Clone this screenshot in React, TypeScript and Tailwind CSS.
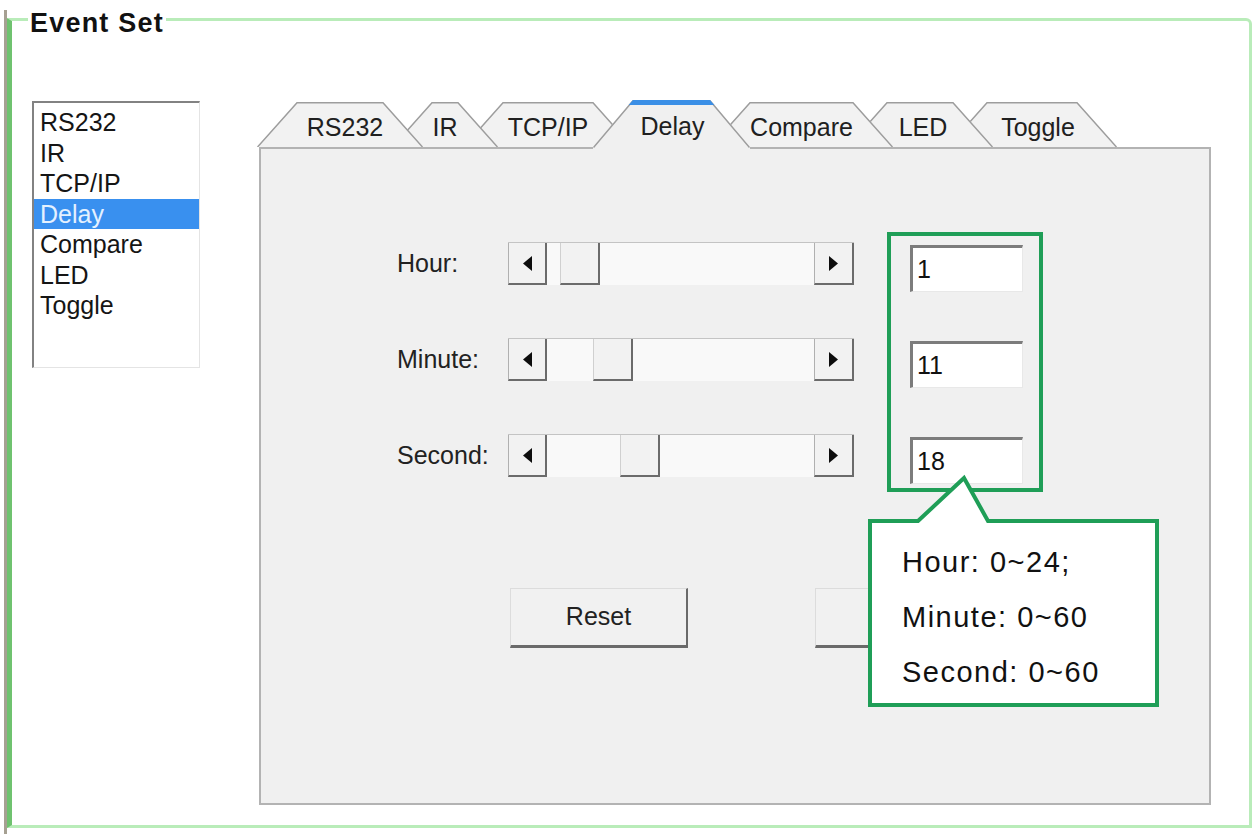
const tabs = [
  { label: "RS232", w: 166, cls: "w-[166px] ml-[-2px] z-[7]", pl: "pl-[10px]" },
  { label: "IR", w: 106, cls: "w-[106px] ml-[-31px] z-[6]", pl: "pl-0" },
  { label: "TCP/IP", w: 170, cls: "w-[170px] ml-[-35px] z-[5]", pl: "pl-0" },
  { label: "Delay", w: 157, cls: "w-[157px] ml-[-40px] z-[20]", pl: "pl-[2px]", active: true },
  { label: "Compare", w: 183, cls: "w-[183px] ml-[-40px] z-[4]", pl: "pl-0" },
  { label: "LED", w: 146, cls: "w-[146px] ml-[-46px] z-[3]", pl: "pl-[6px]" },
  { label: "Toggle", w: 170, cls: "w-[170px] ml-[-46px] z-[2]", pl: "pl-[12px]" },
];

const listItems = ["RS232", "IR", "TCP/IP", "Delay", "Compare", "LED", "Toggle"];

const rows = [
  { label: "Hour:", value: "1", thumb: "ml-[13px]" },
  { label: "Minute:", value: "11", thumb: "ml-[46px]" },
  { label: "Second:", value: "18", thumb: "ml-[73px]" },
];

function Tab({ label, w, cls, pl, active }: { label: string; w: number; cls: string; pl: string; active?: boolean }) {
  return (
    <div className={`relative flex shrink-0 items-center justify-center pt-[6px] ${active ? "h-[49px] pb-[2px]" : "h-[47px] pt-[8px]"} ${cls} ${pl}`}>
      {active ? (
        <svg className="absolute inset-0" width={w} height={49}>
          <polygon points={`0,47 40,0 ${w - 40},0 ${w},47 ${w},49 0,49`} fill="#f0f0f0" />
          <path d={`M0.5,47.5 L40,0.75 L${w - 40},0.75 L${w - 0.5},47.5`} fill="none" stroke="#9d9d9d" strokeWidth="1.5" />
          <polygon points={`40,0 ${w - 40},0 ${w - 35.7},5 35.7,5`} fill="#3b8fe6" />
        </svg>
      ) : (
        <svg className="absolute inset-0" width={w} height={47}>
          <polygon points={`0,47 40,2 ${w - 40},2 ${w},47`} fill="#f2f2f2" />
          <path d={`M0.5,47 L40,2.75 L${w - 40},2.75 L${w - 0.5},47`} fill="none" stroke="#9d9d9d" strokeWidth="1.5" />
        </svg>
      )}
      <span className="relative text-[25px] leading-none text-[#202020]">{label}</span>
    </div>
  );
}

function Arrow({ dir }: { dir: "left" | "right" }) {
  return (
    <svg width="9" height="15" viewBox="0 0 9 15">
      <polygon points={dir === "left" ? "9,0 0,7.5 9,15" : "0,0 9,7.5 0,15"} fill="#0d0d0d" />
    </svg>
  );
}

function ScrollBar({ thumb }: { thumb: string }) {
  const btn =
    "flex items-center justify-center bg-[#f2f2f2] border-l border-l-[#b0b0b0] border-b-2 border-b-[#6b6b6b] border-r-2 border-r-[#6b6b6b]";
  return (
    <div className="flex h-[43px] w-[346px] border-t border-t-[#c4c4c4] bg-[#f9f9f9]">
      <div className={`w-[39px] ${btn}`}>
        <Arrow dir="left" />
      </div>
      <div className={`w-[40px] ${thumb} ${btn} border-l-[#d0d0d0]`} />
      <div className="flex-1" />
      <div className={`w-[40px] ${btn}`}>
        <Arrow dir="right" />
      </div>
    </div>
  );
}

function WinButton({ label }: { label?: string }) {
  return (
    <div className="flex h-[60px] w-[178px] items-center justify-center border-t border-l border-t-[#dcdcdc] border-l-[#dcdcdc] border-b-[3px] border-r-2 border-b-[#6a6a6a] border-r-[#6a6a6a] bg-[#f1f1f1] text-[25px] text-[#222]">
      {label}
    </div>
  );
}

export default function App() {
  return (
    <div className="flex h-[834px] w-[1254px] overflow-hidden bg-white pl-[4px] font-['Liberation_Sans',Arial,sans-serif] text-[#1a1a1a]">
      <div className="mt-[10px] w-[3px] bg-[#a6a092]" />
      <fieldset className="m-0 h-[828px] w-[1245px] rounded-tr-[6px] border-[3px] border-[#b9ecb9] border-l-[5px] border-l-[#6fc26f] p-0">
        <legend className="ml-[16px] px-[2px] pt-[8px] text-[27px] font-bold leading-[30px] tracking-[1.2px] text-[#111]">
          Event Set
        </legend>

        <div className="ml-[20px] mt-[62px] flex items-start">
          {/* list box */}
          <div className="mt-[1px] h-[267px] w-[168px] border-t-2 border-l-2 border-r border-b border-t-[#828282] border-l-[#828282] border-r-[#e4e4e4] border-b-[#e4e4e4] bg-white pt-[4px] text-[25px] leading-[30.5px]">
            {listItems.map((it) => (
              <div
                key={it}
                className={`h-[30.5px] px-[6px] ${it === "Delay" ? "bg-[#3990ef] text-[#e4f1ff]" : "text-[#151515]"}`}
              >
                {it}
              </div>
            ))}
          </div>

          {/* tab control */}
          <div className="ml-[59px] flex w-[952px] flex-col">
            <div className="flex h-[47px] items-start">
              {tabs.map((t) => (
                <Tab key={t.label} {...t} />
              ))}
            </div>

            <div className="flex h-[658px] flex-col border-2 border-[#b3b3b3] bg-[#f0f0f0] pl-[136px] pt-[83px]">
              <div className="flex items-start">
                <div className="mt-[10px] flex flex-col gap-[53px]">
                  {rows.map((r) => (
                    <div key={r.label} className="flex h-[43px] items-center">
                      <span className="w-[111px] text-[25px] text-[#222]">{r.label}</span>
                      <ScrollBar thumb={r.thumb} />
                    </div>
                  ))}
                </div>

                <div className="relative ml-[33px] flex w-[156px] flex-col gap-[49px] border-4 border-[#1f9e57] pb-[4px] pl-[19px] pt-[9px]">
                  {rows.map((r) => (
                    <div
                      key={r.label}
                      className="flex h-[47px] w-[113px] items-center border-t-[3px] border-l-[3px] border-r border-b border-t-[#7c7c7c] border-l-[#7c7c7c] border-r-[#e8e8e8] border-b-[#e8e8e8] bg-white pl-[4px] text-[25px] text-[#111]"
                    >
                      {r.value}
                    </div>
                  ))}

                  {/* callout */}
                  <div className="absolute left-[-26px] top-[238px] z-30 h-[236px] w-[297px]">
                    <svg className="absolute inset-0" width="297" height="236">
                      <polygon
                        points="5,47 53,47 99,4 123,47 292,47 292,231 5,231"
                        fill="#fff"
                        stroke="#1f9e57"
                        strokeWidth="4"
                      />
                    </svg>
                    <div className="absolute left-[37px] top-[61px] text-[29px] leading-[55px] tracking-[1.5px] text-[#111]">
                      <div>Hour: 0~24;</div>
                      <div>Minute: 0~60</div>
                      <div>Second: 0~60</div>
                    </div>
                  </div>
                </div>
              </div>

              <div className="ml-[113px] mt-[96px] flex gap-[127px]">
                <WinButton label="Reset" />
                <WinButton />
              </div>
            </div>
          </div>
        </div>
      </fieldset>
    </div>
  );
}
